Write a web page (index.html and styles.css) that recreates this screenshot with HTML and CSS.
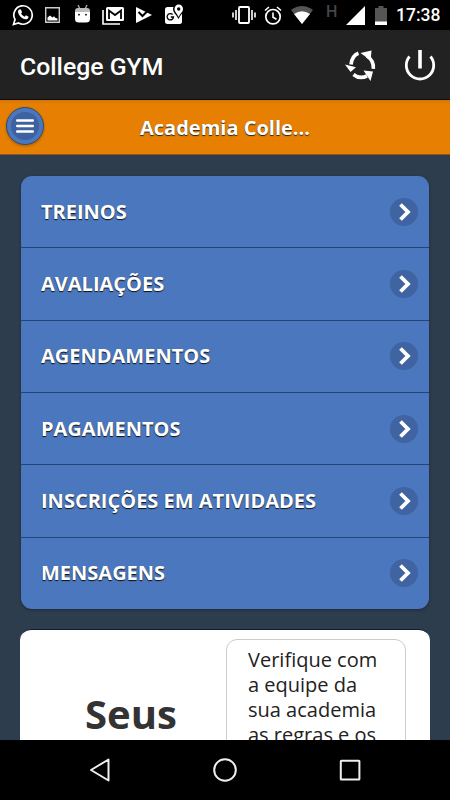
FILE: index.html
```html
<!DOCTYPE html>
<html lang="pt-BR">
<head>
<meta charset="utf-8">
<title>College GYM</title>
<link rel="stylesheet" href="styles.css">
</head>
<body>
<div class="screen">
  <div class="status">
    <div class="status-icons">
      <svg width="22" height="24" viewBox="0 0 22 24"><path d="M1.500 21.500l1.500-5A9.200 9.200 0 1 1 6.500 20z" fill="none" stroke="#fff" stroke-width="1.700"/><path d="M7.300 6.500l1.500-.3 1.300 3-1 1.300c.8 1.500 1.800 2.400 3.500 3.200l1.300-1.400 2.700 1.400c-.2 2-1.600 2.700-3 2.600C10 15.900 6.300 12 6 8.700 6 7.700 6.600 6.900 7.300 6.500z" fill="#fff"/></svg>
      <svg class="gap-photo" width="15" height="16" viewBox="0 0 15 16"><path d="M.7.7h13.600v14.600H.7z" fill="none" stroke="#ccc" stroke-width="1.400"/><path d="M2.500 13.500v-3l2.500-2 2.500 2 1.500-1.200 1.500 1.700 2 .5v2z" fill="#fff"/></svg>
      <svg class="gap-android" width="15" height="18" viewBox="0 0 15 18"><path d="M3 0l1.500 3M12 0l-1.500 3" stroke="#aaa" stroke-width="1.400"/><path d="M0 8V6q0-3 3-3h9q3 0 3 3v2z" fill="#bbb"/><path d="M0 7h15v7q0 3.500-4 3.500H4Q0 17.500 0 14z" fill="#fff"/><circle cx="4" cy="9.700" r=".9"/><circle cx="11" cy="9.700" r=".9"/></svg>
      <svg class="gap-mail" width="22" height="19" viewBox="0 0 22 19"><path d="M1 4v14h17" fill="none" stroke="#fff" stroke-width="1.600"/><rect x="4" y="1" width="18" height="14" rx="1.500" fill="#fff"/><path d="M7 13V4.500l6 4.500 6-4.500V13" fill="none" stroke="#000" stroke-width="1.800"/></svg>
      <svg class="gap-play" width="16" height="18" viewBox="0 0 16 18"><path d="M0 1l16 8L0 17z" fill="#fff"/><path d="M2.500 6l4 4L14 2.500" fill="none" stroke="#000" stroke-width="2"/></svg>
      <svg class="gap-maps" width="19" height="20" viewBox="0 0 19 20"><rect y="3" width="17" height="17" rx="2.500" fill="#fff"/><path d="M7.600 10.500A3.200 3.200 0 1 0 8.500 13H5.800" fill="none" stroke="#000" stroke-width="1.300"/><path d="M13.500 15C11 10 8 8.500 8 5a5.500 5 0 0 1 11 0c0 3.500-3 5-5.500 10z"/><path d="M13.500 13C12 9 9.500 8 9.500 5a4.200 4.500 0 0 1 8.500 0c0 3-2.500 4-4.500 8z" fill="#fff"/><circle cx="13.700" cy="5" r="1.700"/></svg>
    </div>
    <div class="status-icons">
      <svg width="24" height="18" viewBox="0 0 24 18"><path d="M1 6.500v5M4 4v10M20 4v10M23 6.500v5" stroke="#fff" stroke-width="1.600"/><rect x="7" y="1" width="10" height="16" rx="1" fill="none" stroke="#fff" stroke-width="1.800"/></svg>
      <svg class="gap-alarm" width="18" height="19" viewBox="0 0 18 19"><circle cx="9" cy="10.700" r="7.200" fill="none" stroke="#fff" stroke-width="1.700"/><path d="M1 4.500L5 1M17 4.500L13 1M9 6.500v4.700l3.500 2" fill="none" stroke="#fff" stroke-width="1.600"/></svg>
      <svg class="gap-wifi" width="22" height="18" viewBox="0 0 22 18"><path d="M0 4Q11-4 22 4L11 18z" fill="#555"/><path d="M3 8q8-5.500 16 0l-8 10z" fill="#fff"/></svg>
      <span class="network">H</span>
      <svg class="gap-signal" width="19" height="19" viewBox="0 0 19 19"><path d="M19 0v19H0z" fill="#fff"/></svg>
      <svg class="gap-battery" width="12" height="19" viewBox="0 0 12 19"><path d="M0 2h3.500V0h5v2H12v14H0z" fill="#555"/><path d="M0 15.500h12V19H0z" fill="#fff"/></svg>
      <span class="clock">17:38</span>
    </div>
  </div>

  <header class="appbar">
    <h1>College GYM</h1>
    <div class="actions">
      <svg width="32" height="32" viewBox="0 0 32 32"><g fill="none" stroke="#fff" stroke-width="3.600"><path d="M13.500 3.200Q7 5.500 6 14.500"/><path d="M22 6Q29 10.500 28.300 18.800"/><path d="M8.500 24.500Q14.500 29.500 22 26"/></g><path d="M0 14.500l11 2.800L5.500 22zM15.500 3L26.500.5l-.8 10zM18.500 20.500l9.500 1L25.500 31z" fill="#fff"/></svg>
      <svg class="power" width="32" height="32" viewBox="0 0 32 32"><path d="M5.500 6.500a13.700 13.700 0 1 0 21 0" fill="none" stroke="#fff" stroke-width="2.800"/><path d="M16 0v18.500" stroke="#fff" stroke-width="3.600"/></svg>
    </div>
  </header>

  <div class="gymbar">
    <button class="menu-button" aria-label="Menu"><span class="menu-disc"><svg width="18" height="14" viewBox="0 0 18 14"><path d="M1.200 1.500h15.600M1.200 7h15.600M1.200 12.500h15.600" stroke="#fff" stroke-width="2.400" stroke-linecap="round"/></svg></span></button>
    <h2>Academia Colle...</h2>
  </div>

  <main class="content">
    <nav class="menu">
      <a class="item"><span>TREINOS</span><i class="arrow"><svg width="14" height="20" viewBox="0 0 14 20"><path d="M2.500 2.500L10 10l-7.500 7.500" /></svg></i></a>
      <a class="item"><span>AVALIAÇÕES</span><i class="arrow"><svg width="14" height="20" viewBox="0 0 14 20"><path d="M2.500 2.500L10 10l-7.500 7.500" /></svg></i></a>
      <a class="item"><span>AGENDAMENTOS</span><i class="arrow"><svg width="14" height="20" viewBox="0 0 14 20"><path d="M2.500 2.500L10 10l-7.500 7.500" /></svg></i></a>
      <a class="item"><span>PAGAMENTOS</span><i class="arrow"><svg width="14" height="20" viewBox="0 0 14 20"><path d="M2.500 2.500L10 10l-7.500 7.500" /></svg></i></a>
      <a class="item"><span>INSCRIÇÕES EM ATIVIDADES</span><i class="arrow"><svg width="14" height="20" viewBox="0 0 14 20"><path d="M2.500 2.500L10 10l-7.500 7.500" /></svg></i></a>
      <a class="item"><span>MENSAGENS</span><i class="arrow"><svg width="14" height="20" viewBox="0 0 14 20"><path d="M2.500 2.500L10 10l-7.500 7.500" /></svg></i></a>
    </nav>
    <section class="card">
      <h3>Seus</h3>
      <p class="note">Verifique com<br>a equipe da<br>sua academia<br>as regras e os</p>
    </section>
  </main>

  <footer class="navbar">
    <svg width="24" height="26" viewBox="0 0 24 26"><path d="M20.500 2.500v21L3 13z" fill="none" stroke="#eee" stroke-width="2" stroke-linejoin="round"/></svg>
    <svg width="24" height="26" viewBox="0 0 24 26"><circle cx="12" cy="13" r="10.800" fill="none" stroke="#eee" stroke-width="2"/></svg>
    <svg width="24" height="26" viewBox="0 0 24 26"><rect x="2.800" y="3.800" width="18.600" height="18.600" rx=".5" fill="none" stroke="#eee" stroke-width="2"/></svg>
  </footer>
</div>
</body>
</html>
```
FILE: styles.css
```css
* { box-sizing: border-box; }
body, h1, h2, h3, p { margin: 0; }
svg { display: block; flex: none; }
.screen {
  width: 450px;
  height: 800px;
  display: flex;
  flex-direction: column;
  overflow: hidden;
  background: #2d3d4e;
  font-family: "Open Sans", "Noto Sans", sans-serif;
}
.status {
  flex: none;
  height: 30px;
  padding: 0 10px 0 12px;
  display: flex;
  justify-content: space-between;
  background: #000;
  color: #fff;
  font-family: Roboto, sans-serif;
}
.status-icons { display: flex; align-items: center; }
.gap-photo { margin-left: 11px; }
.gap-android { margin-left: 15px; margin-bottom: 2px; }
.gap-mail { margin-left: 12px; }
.gap-play { margin-left: 12px; }
.gap-maps { margin-left: 13px; margin-bottom: 3px; }
.gap-alarm { margin-left: 8px; }
.gap-wifi { margin-left: 9px; }
.network {
  width: 11px;
  margin: 0 0 7px 13px;
  color: #444;
  font-size: 16px;
  line-height: 15px;
  font-weight: 500;
}
.gap-signal { margin-left: 9px; }
.gap-battery { margin-left: 10px; }
.clock {
  width: 44px;
  margin-left: 9px;
  font-size: 17.5px;
  line-height: 32px;
  font-weight: 500;
  white-space: nowrap;
}
.appbar {
  flex: none;
  height: 70px;
  padding: 4px 14px 0 20px;
  display: flex;
  align-items: center;
  justify-content: space-between;
  background: #222;
  border-bottom: 1px solid #100804;
  color: #fff;
}
.appbar h1 { font: 500 24.8px/30px Roboto, sans-serif; }
.actions { display: flex; gap: 27px; padding-bottom: 2px; }
.gymbar {
  flex: none;
  height: 55px;
  padding-left: 6px;
  display: grid;
  grid-template-columns: 38px 1fr 44px;
  align-items: center;
  background: linear-gradient(#d57705, #e78002 5px);
  border-bottom: 1px solid #8b551b;
}
.gymbar h2 {
  padding-top: 1px;
  color: #fff;
  font-size: 20px;
  line-height: 28px;
  font-weight: 700;
  text-align: center;
  text-shadow: 0 1px 1px #222;
}
.menu-button {
  width: 38px;
  height: 38px;
  margin-bottom: 2px;
  padding: 0;
  display: grid;
  place-items: center;
  border: 1px solid #374b70;
  border-radius: 50%;
  background: #4b77be;
  box-shadow: 0 1px 3px rgba(0, 0, 0, .3);
}
.menu-disc {
  width: 28px;
  height: 28px;
  display: grid;
  place-items: center;
  border-radius: 50%;
  background: #3d629f;
}
.content {
  flex: 1;
  min-height: 0;
  padding: 21px 20px 0;
  overflow: hidden;
}
.menu {
  height: 433px;
  margin: 0 1px 20px;
  display: flex;
  flex-direction: column;
  border-radius: 11px;
  overflow: hidden;
  background: #4b77be;
  box-shadow: 0 1px 3px rgba(0, 0, 0, .35);
}
.item {
  flex: 1;
  padding: 0 11px 0 20px;
  display: flex;
  align-items: center;
  justify-content: space-between;
  border-bottom: 1px solid #24447a;
  color: #fff;
  font-size: 20px;
  font-weight: 700;
  line-height: 28px;
  text-shadow: 0 1px 1px #111;
}
.item:last-child { border-bottom: 0; }
.arrow {
  width: 28px;
  height: 28px;
  display: grid;
  place-items: center;
  border-radius: 50%;
  background: #4064a2;
}
.arrow svg { margin-left: 1px; }
.arrow path { fill: none; stroke: #fff; stroke-width: 3.800; }
.card {
  height: 240px;
  padding: 9px 24px 0 0;
  display: grid;
  grid-template-columns: 206px 1fr;
  border: 0 solid #101c38;
  border-top-width: 1px;
  border-radius: 11px;
  background: #fff;
  color: #333;
}
.card h3 {
  padding: 47px 0 0 16px;
  font-size: 40px;
  line-height: 56px;
  text-align: center;
}
.note {
  padding: 7px 0 0 21px;
  border: 1px solid #ccc;
  border-radius: 11px;
  font-size: 20px;
  line-height: 25px;
  color: #222;
  white-space: nowrap;
}
.navbar {
  flex: none;
  height: 60px;
  padding: 0 88px;
  display: flex;
  align-items: center;
  justify-content: space-between;
  background: #000;
}
```
